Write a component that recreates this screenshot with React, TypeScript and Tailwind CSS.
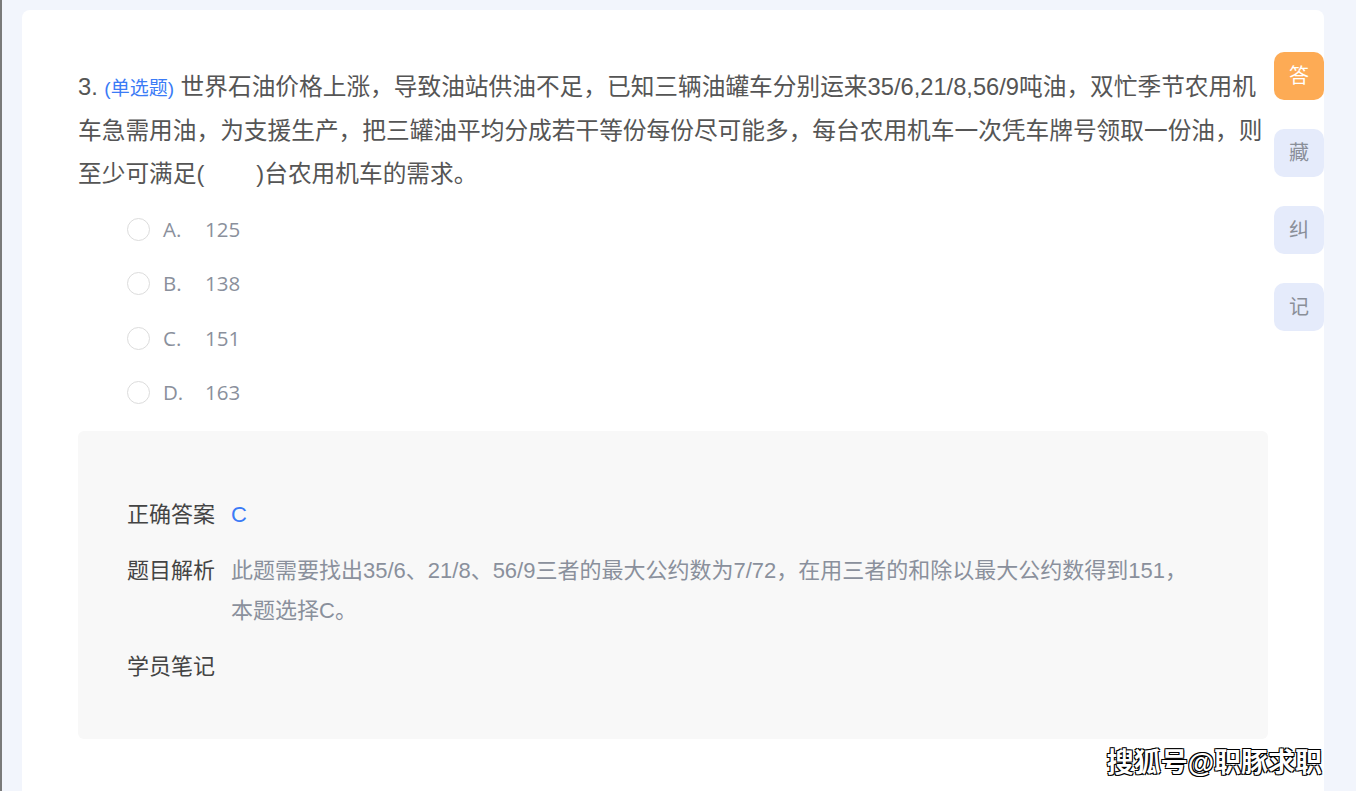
import React from "react";

const options = [
  { key: "A.", value: "125" },
  { key: "B.", value: "138" },
  { key: "C.", value: "151" },
  { key: "D.", value: "163" },
];

const sideButtons = [
  { label: "答", active: true },
  { label: "藏", active: false },
  { label: "纠", active: false },
  { label: "记", active: false },
];

const cjk = "font-['Liberation_Sans','Noto_Sans_CJK_SC',sans-serif]";

export default function App() {
  return (
    <div className={`h-[791px] w-full overflow-hidden bg-[#f2f5fc] border-l-2 border-[#7a7a7a] ${cjk}`}>
      <div className="relative ml-[20px] mt-[10px] h-[781px] w-[1302px] rounded-t-lg bg-white px-[56px] pt-[56px]">
        {/* question */}
        <p className="text-[23.7px] leading-[43px] text-[#555]">
          3.{" "}
          <span className="text-[19px] text-[#3b7bf6]">(单选题)</span>{" "}
          世界石油价格上涨，导致油站供油不足，已知三辆油罐车分别运来35/6,21/8,56/9吨油，双忙季节农用机
          <br />
          车急需用油，为支援生产，把三罐油平均分成若干等份每份尽可能多，每台农用机车一次凭车牌号领取一份油，则
          <br />
          至少可满足(
          <span className="inline-block w-[52px]" />
          )台农用机车的需求。
        </p>

        {/* options */}
        <div className="mt-[6px] pl-[49px]">
          {options.map((o) => (
            <div key={o.key} className="flex h-[54.5px] items-center">
              <span className="h-[23px] w-[23px] rounded-full border border-[#dcdcdc] bg-white" />
              <span className="ml-[13px] w-[42px] font-['Open_Sans',sans-serif] text-[20.5px] text-[#8a909c]">
                {o.key}
              </span>
              <span className="font-['Open_Sans',sans-serif] text-[20.5px] text-[#8a909c]">{o.value}</span>
            </div>
          ))}
        </div>

        {/* analysis box */}
        <div className="mt-[11px] h-[308px] rounded-md bg-[#f8f8f8] pl-[49px] pt-[64px] text-[22px] leading-[40px]">
          <div className="flex">
            <span className="w-[104px] shrink-0 text-[#444]">正确答案</span>
            <span className="text-[#3b7bf6]">C</span>
          </div>
          <div className="mt-[16px] flex">
            <span className="w-[104px] shrink-0 text-[#444]">题目解析</span>
            <span className="text-[#8a909c]">
              此题需要找出35/6、21/8、56/9三者的最大公约数为7/72，在用三者的和除以最大公约数得到151，
              <br />
              本题选择C。
            </span>
          </div>
          <div className="mt-[16px] flex">
            <span className="w-[104px] shrink-0 text-[#444]">学员笔记</span>
          </div>
        </div>

        {/* side tools */}
        <div className="absolute right-0 top-[42px] flex flex-col gap-[29px]">
          {sideButtons.map((b) => (
            <div
              key={b.label}
              className={`flex h-[48px] w-[50px] items-center justify-center rounded-[10px] text-[20px] ${
                b.active ? "bg-[#fdab55] text-white" : "bg-[#e5ebfb] text-[#8a8f99]"
              }`}
            >
              {b.label}
            </div>
          ))}
        </div>

        {/* watermark */}
        <div className="absolute bottom-[14px] right-[2px] text-[27px] font-bold leading-none text-white [text-shadow:1px_1px_0_#000,-1px_-1px_0_#000,1px_-1px_0_#000,-1px_1px_0_#000]">
          搜狐号@职豚求职
        </div>
      </div>
    </div>
  );
}
